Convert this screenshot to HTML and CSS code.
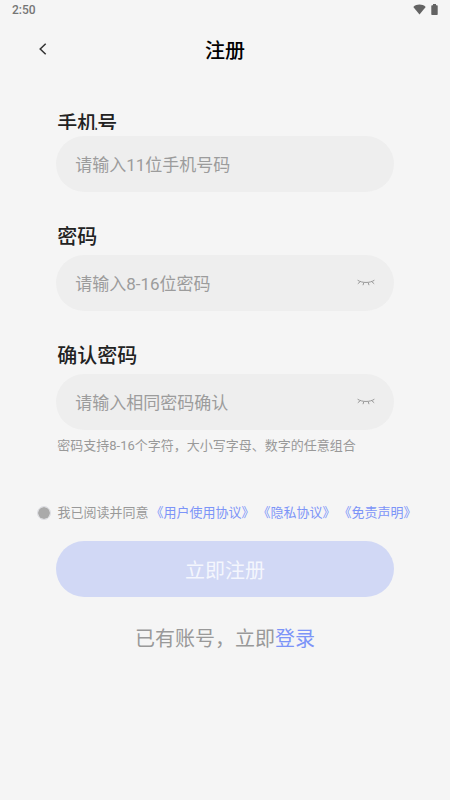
FILE: index.html
```html
<!DOCTYPE html>
<html lang="zh-CN">
<head>
<meta charset="utf-8">
<meta name="viewport" content="width=device-width, initial-scale=1">
<title>注册</title>
<link rel="stylesheet" href="styles.css">
</head>
<body>
<div class="status">
  <span>2:50</span>
  <span class="status-icons">
    <svg width="13" height="11" viewBox="0 0 13 11" aria-hidden="true"><path d="M0.3 2.9C3.6-0.2 9.4-0.2 12.7 2.9L6.5 10.6Z"/></svg>
    <svg width="7" height="11" viewBox="0 0 7 11" aria-hidden="true"><path d="M2 0h3v1.2h1q.7 0 .7.7v8.4q0 .7-.7.7H1q-.7 0-.7-.7V1.9q0-.7.7-.7h1z"/></svg>
  </span>
</div>
<header class="nav">
  <button class="back" type="button" aria-label="返回">
    <svg width="8" height="12" viewBox="0 0 8 12" aria-hidden="true"><path d="M6.7.7 1.2 6l5.5 5.3"/></svg>
  </button>
  <h1>注册</h1>
</header>
<main>
  <form>
    <div class="fields">
      <div class="field">
        <label class="clipped" for="phone">手机号</label>
        <div class="box"><input id="phone" type="tel" placeholder="请输入11位手机号码"></div>
      </div>
      <div class="field">
        <label for="password">密码</label>
        <div class="box">
          <input id="password" type="password" placeholder="请输入8-16位密码">
          <button class="eye" type="button" aria-label="显示密码">
            <svg width="18" height="8" viewBox="0 0 18 8" aria-hidden="true"><path d="M.6 1.2C5 4.2 13 4.2 17.4 1.2M3.3 2.6.8 4.8M14.7 2.6l2.5 2.2M6.8 3.5 6 6.2M11.2 3.5l.8 2.7"/></svg>
          </button>
        </div>
      </div>
      <div class="field">
        <label for="confirm">确认密码</label>
        <div class="box">
          <input id="confirm" type="password" placeholder="请输入相同密码确认">
          <button class="eye" type="button" aria-label="显示密码">
            <svg width="18" height="8" viewBox="0 0 18 8" aria-hidden="true"><path d="M.6 1.2C5 4.2 13 4.2 17.4 1.2M3.3 2.6.8 4.8M14.7 2.6l2.5 2.2M6.8 3.5 6 6.2M11.2 3.5l.8 2.7"/></svg>
          </button>
        </div>
        <p class="hint">密码支持8-16个字符，大小写字母、数字的任意组合</p>
      </div>
    </div>
    <div class="agree">
      <input id="agree" type="checkbox">
      <label for="agree">我已阅读并同意</label>
      <span class="links"><a href="#terms">《用户使用协议》</a><a href="#privacy">《隐私协议》</a><a href="#disclaimer">《免责声明》</a></span>
    </div>
    <button class="submit" type="submit">立即注册</button>
  </form>
  <p class="login">已有账号，立即<a href="#login">登录</a></p>
</main>
</body>
</html>
```
FILE: styles.css
```css
* {
  box-sizing: border-box;
}

body {
  margin: 0;
  min-height: 100vh;
  background: #f5f5f5;
  color: #222;
  font-family: Roboto, "Noto Sans CJK SC", sans-serif;
}

button,
input {
  font-family: inherit;
  border: 0;
  padding: 0;
  background: none;
}

h1,
p {
  margin: 0;
}

a {
  color: #7c94f8;
  text-decoration: none;
}

svg {
  display: block;
}

.status {
  display: flex;
  justify-content: space-between;
  align-items: center;
  height: 20px;
  padding: 0 12px;
  color: #757575;
  font-size: 12px;
  font-weight: 500;
}

.status-icons {
  display: flex;
  gap: 5px;
  padding-bottom: 2px;
  fill: #636363;
}

.nav {
  display: grid;
  grid-template-columns: 56px 1fr 56px;
  align-items: center;
  height: 58px;
}

.back {
  display: flex;
  justify-content: flex-end;
  padding: 12px 9px;
}

.back svg {
  fill: none;
  stroke: #333;
  stroke-width: 1.5;
}

h1 {
  color: #000;
  font-size: 20px;
  font-weight: 500;
  text-align: center;
}

main {
  padding: 30px 0;
}

.fields {
  display: flex;
  flex-direction: column;
  gap: 29px;
  padding: 0 12.5%;
}

.field {
  display: flex;
  flex-direction: column;
}

.field label {
  margin-bottom: 2px;
  padding-left: 1px;
  font-size: 20px;
  font-weight: 500;
  line-height: 32px;
}

.field .clipped {
  height: 22px;
  margin-bottom: 6px;
  overflow: hidden;
}

.box {
  display: flex;
  align-items: center;
  height: 56px;
  padding: 0 19px;
  border-radius: 28px;
  background: #eee;
}

.box input {
  flex: 1;
  min-width: 0;
  height: 100%;
  padding-top: 2px;
  font-size: 17px;
}

.box input::placeholder {
  color: #9c9c9c;
}

.eye svg {
  fill: none;
  stroke: #999;
}

.hint {
  margin-top: 6px;
  padding-left: 1px;
  color: #999;
  font-size: 13px;
  line-height: 20px;
}

.agree {
  display: flex;
  justify-content: center;
  align-items: center;
  margin: 47px 0 18px;
  padding-left: 4px;
  color: #999;
  font-size: 13px;
  line-height: 20px;
  white-space: nowrap;
}

.agree input {
  appearance: none;
  width: 14px;
  height: 14px;
  margin: 0 6px 0 0;
  border: 1px solid #dcdde2;
  border-radius: 50%;
  background: #aaa;
  background-clip: padding-box;
}

.links {
  display: flex;
  gap: 3px;
  margin-left: 2px;
}

.submit {
  display: block;
  width: 75%;
  height: 56px;
  margin: 0 auto;
  border-radius: 28px;
  background: #d1d8f5;
  color: #f4f6fd;
  font-size: 20px;
}

.login {
  margin-top: 26px;
  color: #999;
  font-size: 20px;
  line-height: 32px;
  text-align: center;
}
```
